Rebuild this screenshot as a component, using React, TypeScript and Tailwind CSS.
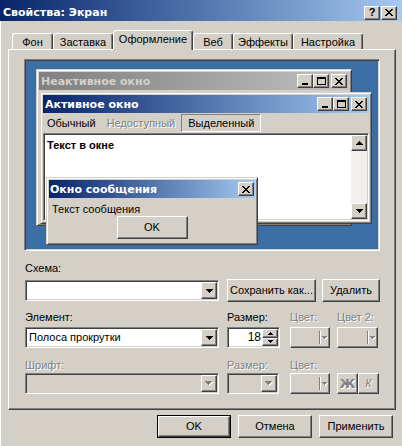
import React from 'react';

const face = 'bg-[#d4d0c8]';
const raised =
  'border border-t-white border-l-white border-r-[#404040] border-b-[#404040] shadow-[inset_-1px_-1px_#808080]';
const sunken =
  'border border-t-[#808080] border-l-[#808080] border-r-white border-b-white shadow-[inset_1px_1px_#404040,inset_-1px_-1px_#d4d0c8]';
const frame =
  'border border-t-[#d4d0c8] border-l-[#d4d0c8] border-r-[#404040] border-b-[#404040] shadow-[inset_1px_1px_#fff,inset_-1px_-1px_#808080] p-[2px]';
const grayText = 'text-[#808080] [text-shadow:1px_1px_0_#fff]';
const capFont = "font-['DejaVu_Sans',sans-serif] font-bold text-[11px]";

const DOWN = ['#######', '.#####.', '..###..', '...#...'];
const DOWN_S = ['#####', '.###.', '..#..'];
const UP_S = ['..#..', '.###.', '#####'];
const UP = ['...#...', '..###..', '.#####.', '#######'];
const CLOSE = ['##....##', '.##..##.', '..####..', '...##...', '..####..', '.##..##.', '##....##'];
const MIN = ['......', '......', '......', '......', '......', '######', '######'];
const MAX = ['#########', '#########', '#.......#', '#.......#', '#.......#', '#.......#', '#.......#', '#########'];

function Pix({ map, color = '#000', emboss = false }: { map: string[]; color?: string; emboss?: boolean }) {
  const cells: { x: number; y: number }[] = [];
  map.forEach((row, y) => [...row].forEach((c, x) => c === '#' && cells.push({ x, y })));
  const w = map[0].length + (emboss ? 1 : 0);
  const h = map.length + (emboss ? 1 : 0);
  return (
    <svg width={w} height={h} shapeRendering="crispEdges">
      {emboss && cells.map((c) => <rect key={`s${c.x}-${c.y}`} x={c.x + 1} y={c.y + 1} width={1} height={1} fill="#fff" />)}
      {cells.map((c) => <rect key={`${c.x}-${c.y}`} x={c.x} y={c.y} width={1} height={1} fill={color} />)}
    </svg>
  );
}

function CapBtn({ children }: { children: React.ReactNode }) {
  return (
    <div className={`w-[16px] h-[14px] ${face} ${raised} flex items-center justify-center`}>{children}</div>
  );
}

function Button({ children, w, def = false }: { children: React.ReactNode; w: string; def?: boolean }) {
  const body = (
    <div className={`h-full w-full ${face} ${raised} flex items-center justify-center`}>{children}</div>
  );
  return def ? (
    <div className={`${w} h-[23px] border border-black`}>{body}</div>
  ) : (
    <div className={`${w} h-[23px]`}>{body}</div>
  );
}

function Combo({ text, w, disabled = false }: { text?: string; w: string; disabled?: boolean }) {
  return (
    <div className={`flex h-[21px] ${w} p-[1px] ${sunken} ${disabled ? 'bg-[#d4d0c8]' : 'bg-white'}`}>
      <div className="flex-1 flex items-center pl-[2px] whitespace-nowrap overflow-hidden">{text}</div>
      <div className={`w-[16px] h-full ${face} ${raised} flex items-center justify-center`}>
        {disabled ? <Pix map={DOWN} color="#808080" emboss /> : <Pix map={DOWN} />}
      </div>
    </div>
  );
}

function ColorBtn({ w }: { w: string }) {
  return (
    <div className={`flex h-[21px] ${w} ${face} ${raised} items-center`}>
      <div className="flex-1" />
      <div className="w-[1px] h-[13px] bg-[#808080] shadow-[1px_0_#fff]" />
      <div className="w-[9px] flex justify-center">
        <Pix map={DOWN_S} color="#808080" emboss />
      </div>
    </div>
  );
}

const tabs = [
  { label: 'Фон', w: 'w-[41px]' },
  { label: 'Заставка', w: 'w-[60px]' },
  { label: 'Оформление', w: 'w-[80px]', active: true },
  { label: 'Веб', w: 'w-[40px]' },
  { label: 'Эффекты', w: 'w-[60px]' },
  { label: 'Настройка', w: 'w-[70px]' },
];

function Preview() {
  return (
    <div className={`relative w-[356px] h-[192px] ${sunken} bg-[#3a6ea5] overflow-hidden`}>
      {/* inactive window */}
      <div className={`absolute left-[11px] top-[9px] w-[316px] h-[157px] ${face} ${frame}`}>
        <div className="h-[18px] flex items-center bg-gradient-to-r from-[#808080] to-[#c0c0c0] pl-[2px] pr-[2px]">
          <span className={`${capFont} text-[#d4d0c8] flex-1`}>Неактивное окно</span>
          <CapBtn><Pix map={MIN} /></CapBtn>
          <CapBtn><Pix map={MAX} /></CapBtn>
          <div className="w-[2px]" />
          <CapBtn><Pix map={CLOSE} /></CapBtn>
        </div>
      </div>

      {/* active window */}
      <div className={`absolute left-[15px] top-[32px] w-[332px] h-[132px] ${face} ${frame} flex flex-col`}>
        <div className="h-[18px] flex items-center bg-gradient-to-r from-[#0a246a] to-[#a6caf0] pl-[2px] pr-[2px]">
          <span className={`${capFont} text-white flex-1`}>Активное окно</span>
          <CapBtn><Pix map={MIN} /></CapBtn>
          <CapBtn><Pix map={MAX} /></CapBtn>
          <div className="w-[2px]" />
          <CapBtn><Pix map={CLOSE} /></CapBtn>
        </div>
        <div className="h-[20px] flex items-center whitespace-nowrap">
          <span className="ml-[4px]">Обычный</span>
          <span className={`ml-[11px] ${grayText}`}>Недоступный</span>
          <span className="ml-[6px] h-[18px] flex items-center px-[6px] border border-t-[#808080] border-l-[#808080] border-r-white border-b-white">
            Выделенный
          </span>
        </div>
        <div className={`flex-1 flex p-[1px] ${sunken} bg-white`}>
          <div className="flex-1 pl-[2px] pt-[4px] font-bold leading-[13px]">Текст в окне</div>
          <div className="w-[16px] flex flex-col bg-[#f1efeb]">
            <div className={`h-[16px] ${face} ${raised} flex items-center justify-center`}><Pix map={UP} /></div>
            <div className="flex-1" />
            <div className={`h-[16px] ${face} ${raised} flex items-center justify-center`}><Pix map={DOWN} /></div>
          </div>
        </div>
      </div>

      {/* message box */}
      <div className={`absolute left-[21px] top-[117px] w-[212px] h-[68px] ${face} ${frame} flex flex-col`}>
        <div className="h-[18px] flex items-center bg-gradient-to-r from-[#0a246a] to-[#a6caf0] pl-[1px] pr-[1px]">
          <span className={`${capFont} text-white flex-1`}>Окно сообщения</span>
          <CapBtn><Pix map={CLOSE} /></CapBtn>
        </div>
        <div className="pl-[3px] pt-[5px] leading-[13px]">Текст сообщения</div>
        <div className="flex justify-center">
          <Button w="w-[71px]">OK</Button>
        </div>
      </div>
    </div>
  );
}

export default function App() {
  return (
    <div className={`w-[402px] h-[446px] ${face} overflow-hidden text-[11px] leading-[13px] text-black font-['Liberation_Sans',Arial,sans-serif] shadow-[inset_1px_0_#fff]`}>
      {/* title bar */}
      <div className="h-[21px] pt-[4px] pl-[3px] pr-[5px] flex items-center bg-gradient-to-r from-[#0a246a] to-[#a6caf0]">
        <span className={`${capFont} text-white flex-1`}>Свойства: Экран</span>
        <div className="flex gap-[1px]">
          <CapBtn><span className="font-bold text-[11px] leading-none">?</span></CapBtn>
          <CapBtn><Pix map={CLOSE} /></CapBtn>
        </div>
      </div>

      {/* tabs */}
      <div className="flex items-end h-[19px] mt-[9px] pl-[12px]">
        {tabs.map((t) =>
          t.active ? (
            <div
              key={t.label}
              className={`${t.w} h-[20px] -mb-[1px] relative z-10 ${face} border-t border-l border-r border-t-white border-l-white border-r-[#404040] shadow-[inset_-1px_0_#808080] rounded-t-[3px] flex justify-center pt-[2px]`}
            >
              {t.label}
            </div>
          ) : (
            <div
              key={t.label}
              className={`${t.w} h-[16px] border-t border-l border-r border-t-white border-l-white border-r-[#404040] shadow-[inset_-1px_0_#808080] rounded-t-[3px] flex justify-center pt-[2px]`}
            >
              {t.label}
            </div>
          )
        )}
      </div>

      {/* panel */}
      <div className={`ml-[8px] w-[388px] h-[361px] ${raised} pt-[9px] pl-[15px]`}>
        <Preview />

        <div className="ml-[1px]">
          <div className="mt-[11px] h-[13px]">Схема:</div>
          <div className="mt-[4px] h-[23px] flex items-center">
            <Combo w="w-[194px]" />
            <div className="ml-[8px]"><Button w="w-[89px]">Сохранить как...</Button></div>
            <div className="ml-[6px]"><Button w="w-[58px]">Удалить</Button></div>
          </div>

          <div className="mt-[9px] h-[13px] flex">
            <div className="w-[202px]">Элемент:</div>
            <div className="w-[63px]">Размер:</div>
            <div className={`w-[47px] ${grayText}`}>Цвет:</div>
            <div className={grayText}>Цвет 2:</div>
          </div>
          <div className="mt-[3px] flex">
            <Combo w="w-[194px]" text="Полоса прокрутки" />
            <div className={`ml-[8px] flex h-[21px] w-[53px] p-[1px] ${sunken} bg-white`}>
              <div className="flex-1 flex items-center justify-end pr-[1px] text-[12px]">18</div>
              <div className="w-[16px] flex flex-col">
                <div className={`flex-1 ${face} ${raised} flex items-center justify-center`}><Pix map={UP_S} /></div>
                <div className={`flex-1 ${face} ${raised} flex items-center justify-center`}><Pix map={DOWN_S} /></div>
              </div>
            </div>
            <div className="ml-[10px]"><ColorBtn w="w-[40px]" /></div>
            <div className="ml-[7px]"><ColorBtn w="w-[41px]" /></div>
          </div>

          <div className={`mt-[11px] h-[13px] flex ${grayText}`}>
            <div className="w-[202px]">Шрифт:</div>
            <div className="w-[63px]">Размер:</div>
            <div>Цвет:</div>
          </div>
          <div className="mt-[1px] flex">
            <Combo w="w-[194px]" disabled />
            <div className="ml-[8px]"><Combo w="w-[52px]" disabled /></div>
            <div className="ml-[11px]"><ColorBtn w="w-[40px]" /></div>
            <div className={`ml-[7px] w-[21px] h-[21px] ${face} ${raised} flex items-center justify-center font-bold text-[13px] font-['DejaVu_Sans',sans-serif] ${grayText}`}>
              Ж
            </div>
            <div className={`w-[21px] h-[21px] ${face} ${raised} flex items-center justify-center italic text-[10px] ${grayText}`}>
              К
            </div>
          </div>
        </div>
      </div>

      {/* dialog buttons */}
      <div className="mt-[5px] pr-[9px] flex justify-end gap-[7px]">
        <Button w="w-[74px]" def>OK</Button>
        <Button w="w-[74px]">Отмена</Button>
        <Button w="w-[74px]">Применить</Button>
      </div>
    </div>
  );
}
